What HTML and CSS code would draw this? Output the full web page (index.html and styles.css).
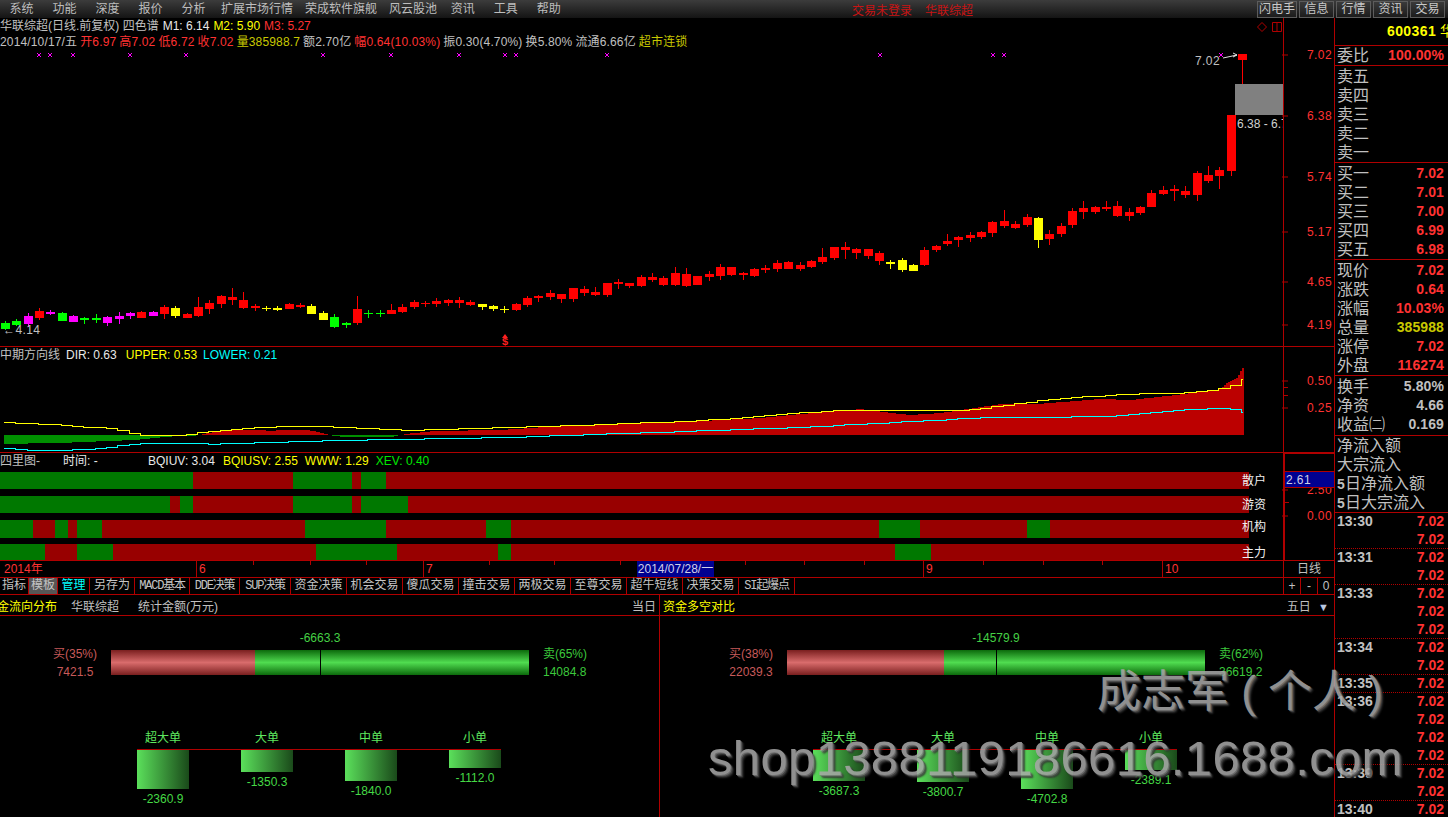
FILE: index.html
```html
<!DOCTYPE html>
<html lang="zh-CN">
<head>
<meta charset="utf-8">
<title>华联综超 日线</title>
<link rel="stylesheet" href="styles.css">
</head>
<body>
<div class="app">
  <header class="menubar">
    <nav class="menu">
      <a class="mi">系统</a><a class="mi">功能</a><a class="mi">深度</a><a class="mi">报价</a><a class="mi">分析</a>
      <a class="mi long">扩展市场行情</a><a class="mi long">荣成软件旗舰</a><a class="mi long last">风云股池</a>
      <a class="mi">资讯</a><a class="mi">工具</a><a class="mi">帮助</a>
    </nav>
    <div class="status"><span>交易未登录</span><span>华联综超</span></div>
    <div class="quick">
      <button class="qb wide">闪电手</button><button class="qb">信息</button><button class="qb">行情</button><button class="qb">资讯</button><button class="qb">交易</button>
    </div>
  </header>

  <div class="workspace">
    <main class="main">
      <section class="pane pane-k">
        <div class="plot">
          <svg id="candles" class="canvas" viewBox="0 18 1283 328" width="1283" height="328"></svg>
          <div class="legend">
            <span class="c-grey">华联综超(日线.前复权) 四色谱</span>
            <span class="c-white">M1: 6.14</span><span class="c-yellow">M2: 5.90</span><span class="c-red">M3: 5.27</span>
          </div>
          <div class="quote">
            <span class="c-grey">2014/10/17/五</span>
            <span class="c-red">开6.97</span><span class="c-red">高7.02</span><span class="c-red">低6.72</span><span class="c-red">收7.02</span>
            <span class="c-olive">量385988.7</span><span class="c-grey">额2.70亿</span><span class="c-red">幅0.64(10.03%)</span>
            <span class="c-grey">振0.30(4.70%)</span><span class="c-grey">换5.80%</span><span class="c-grey">流通6.66亿</span><span class="c-olive">超市连锁</span>
          </div>
          <span class="note note-high">7.02</span>
          <span class="note note-low">←4.14</span>
          <div class="range"><i class="range-box"></i><span class="range-text">6.38 - 6.7</span></div>
          <div class="signal"><i class="signal-arrow"></i><span>$</span></div>
          <svg class="win-icons" width="26" height="12" viewBox="0 0 26 12"><path d="M5 1.5 9.5 6 5 10.5.5 6Z"/><path d="M15.5 1.5h9v9h-9ZM20 1.5v9"/></svg>
        </div>
        <div class="axis">
          <span class="tick" style="top:36px">7.02</span>
          <span class="tick" style="top:97px">6.38</span>
          <span class="tick" style="top:158px">5.74</span>
          <span class="tick" style="top:213px">5.17</span>
          <span class="tick" style="top:263px">4.65</span>
          <span class="tick" style="top:306px">4.19</span>
        </div>
      </section>

      <section class="pane pane-dir">
        <div class="plot">
          <svg id="bands" class="canvas" viewBox="0 347 1283 105" width="1283" height="105"></svg>
          <div class="legend">
            <span class="c-grey">中期方向线</span><span class="c-white">DIR: 0.63</span><span class="c-yellow spaced">UPPER: 0.53</span><span class="c-cyan">LOWER: 0.21</span>
          </div>
        </div>
        <div class="axis">
          <span class="tick" style="top:33px">0.50</span>
          <span class="tick" style="top:60px">0.25</span>
          <i class="minor" style="top:40px"></i>
          <i class="minor" style="top:48px"></i>
        </div>
      </section>

      <section class="pane pane-quad">
        <div class="plot">
          <div class="legend">
            <span class="c-grey quad-title">四里图-</span><span class="c-white quad-time">时间: -</span>
            <span class="c-white">BQIUV: 3.04</span><span class="c-yellow">BQIUSV: 2.55</span><span class="c-yellow">WWW: 1.29</span><span class="c-green">XEV: 0.40</span>
          </div>
          <div id="quad" class="quad"></div>
        </div>
        <div class="axis axis-boxed">
          <span class="tick" style="top:35px">2.50</span>
          <span class="tick" style="top:61px">0.00</span>
          <i class="minor" style="top:48px"></i>
          <span class="cursor-price">2.61</span>
        </div>
      </section>

      <div class="dates">
        <div class="date-track">
          <span class="year">2014年</span>
          <span class="month" style="left:196px">6</span>
          <span class="month" style="left:423px">7</span>
          <span class="month" style="left:923px">9</span>
          <span class="month" style="left:1162px">10</span>
          <i class="dtick" style="left:253px"></i><i class="dtick" style="left:310px"></i><i class="dtick" style="left:366px"></i>
          <i class="dtick" style="left:489px"></i><i class="dtick" style="left:554px"></i><i class="dtick" style="left:620px"></i>
          <i class="dtick" style="left:745px"></i><i class="dtick" style="left:804px"></i><i class="dtick" style="left:864px"></i>
          <i class="dtick" style="left:983px"></i><i class="dtick" style="left:1043px"></i><i class="dtick" style="left:1102px"></i>
          <span class="cursor-date">2014/07/28/一</span>
        </div>
        <div class="period">日线</div>
      </div>

      <div class="tabbar">
        <div class="tabs">
          <a class="tab w29">指标</a><a class="tab w29 active">模板</a><a class="tab w32 accent">管理</a><a class="tab w45">另存为</a>
          <a class="tab w55">MACD基本</a><a class="tab w50">DDE决策</a><a class="tab w51">SUP决策</a>
          <a class="tab w56">资金决策</a><a class="tab w56">机会交易</a><a class="tab w56">傻瓜交易</a><a class="tab w56">撞击交易</a>
          <a class="tab w56">两极交易</a><a class="tab w56">至尊交易</a><a class="tab w56">超牛短线</a><a class="tab w56">决策交易</a><a class="tab w56">SI起爆点</a>
        </div>
        <div class="zoomers"><span>+</span><span>-</span><span>0</span></div>
      </div>

      <div class="funds">
        <section class="panel panel-left">
          <header class="panel-head">
            <span class="c-yellow head-title">金流向分布</span><span class="head-code">华联综超</span><span class="head-unit">统计金额(万元)</span>
            <span class="head-range">当日</span>
          </header>
          <div class="flow">
            <div class="flow-side buy"><span>买(35%)</span><span>7421.5</span></div>
            <div class="flow-bar">
              <div class="seg-buy" style="width:34.4%"></div><div class="seg-sell"></div>
              <i class="flow-mid"></i><span class="flow-net">-6663.3</span>
            </div>
            <div class="flow-side sell"><span>卖(65%)</span><span>14084.8</span></div>
          </div>
          <div class="tiers">
            <div class="tier"><span class="tier-name">超大单</span><i class="tier-bar" style="height:39px"></i><span class="tier-val">-2360.9</span></div>
            <div class="tier"><span class="tier-name">大单</span><i class="tier-bar" style="height:22px"></i><span class="tier-val">-1350.3</span></div>
            <div class="tier"><span class="tier-name">中单</span><i class="tier-bar" style="height:31px"></i><span class="tier-val">-1840.0</span></div>
            <div class="tier"><span class="tier-name">小单</span><i class="tier-bar" style="height:18px"></i><span class="tier-val">-1112.0</span></div>
          </div>
        </section>
        <section class="panel panel-right">
          <header class="panel-head">
            <span class="c-yellow">资金多空对比</span>
            <span class="head-range">五日 <b class="caret">▼</b></span>
          </header>
          <div class="flow">
            <div class="flow-side buy"><span>买(38%)</span><span>22039.3</span></div>
            <div class="flow-bar">
              <div class="seg-buy" style="width:37.6%"></div><div class="seg-sell"></div>
              <i class="flow-mid"></i><span class="flow-net">-14579.9</span>
            </div>
            <div class="flow-side sell"><span>卖(62%)</span><span>36619.2</span></div>
          </div>
          <div class="tiers">
            <div class="tier"><span class="tier-name">超大单</span><i class="tier-bar" style="height:31px"></i><span class="tier-val">-3687.3</span></div>
            <div class="tier"><span class="tier-name">大单</span><i class="tier-bar" style="height:32px"></i><span class="tier-val">-3800.7</span></div>
            <div class="tier"><span class="tier-name">中单</span><i class="tier-bar" style="height:39px"></i><span class="tier-val">-4702.8</span></div>
            <div class="tier"><span class="tier-name">小单</span><i class="tier-bar" style="height:20px"></i><span class="tier-val">-2389.1</span></div>
          </div>
        </section>
      </div>
    </main>

    <aside class="side">
      <div class="sec sec-code"><span class="code">600361</span> <span class="c-yellow name">华联综超</span></div>
      <div class="sec sec-ratio"><div class="row"><span>委比</span><b class="v-red">100.00%</b></div></div>
      <div class="sec">
        <div class="row"><span>卖五</span></div><div class="row"><span>卖四</span></div><div class="row"><span>卖三</span></div><div class="row"><span>卖二</span></div><div class="row"><span>卖一</span></div>
      </div>
      <div class="sec">
        <div class="row"><span>买一</span><b class="v-red">7.02</b></div><div class="row"><span>买二</span><b class="v-red">7.01</b></div><div class="row"><span>买三</span><b class="v-red">7.00</b></div><div class="row"><span>买四</span><b class="v-red">6.99</b></div><div class="row"><span>买五</span><b class="v-red">6.98</b></div>
      </div>
      <div class="sec">
        <div class="row"><span>现价</span><b class="v-red">7.02</b></div><div class="row"><span>涨跌</span><b class="v-red">0.64</b></div><div class="row"><span>涨幅</span><b class="v-red">10.03%</b></div>
        <div class="row"><span>总量</span><b class="v-olive">385988</b></div><div class="row"><span>涨停</span><b class="v-red">7.02</b></div><div class="row"><span>外盘</span><b class="v-red">116274</b></div>
      </div>
      <div class="sec sec-fin">
        <div class="row"><span>换手</span><b class="v-grey">5.80%</b></div><div class="row"><span>净资</span><b class="v-grey">4.66</b></div><div class="row"><span>收益㈡</span><b class="v-grey">0.169</b></div>
      </div>
      <div class="sec sec-flow">
        <div class="row"><span>净流入额</span></div><div class="row"><span>大宗流入</span></div><div class="row"><span><b class="five">5</b>日净流入额</span></div><div class="row"><span><b class="five">5</b>日大宗流入</span></div>
      </div>
      <div class="trades">
        <div class="tg n2"><div class="tr"><span>13:30</span><b>7.02</b></div><div class="tr"><b>7.02</b></div></div>
        <div class="tg n2"><div class="tr"><span>13:31</span><b>7.02</b></div><div class="tr"><b>7.02</b></div></div>
        <div class="tg n3"><div class="tr"><span>13:33</span><b>7.02</b></div><div class="tr"><b>7.02</b></div><div class="tr"><b>7.02</b></div></div>
        <div class="tg n2"><div class="tr"><span>13:34</span><b>7.02</b></div><div class="tr"><b>7.02</b></div></div>
        <div class="tg n1"><div class="tr"><span>13:35</span><b>7.02</b></div></div>
        <div class="tg n4"><div class="tr"><span>13:36</span><b>7.02</b></div><div class="tr"><b>7.02</b></div><div class="tr"><b>7.02</b></div><div class="tr"><b>7.02</b></div></div>
        <div class="tg n2"><div class="tr"><span>13:39</span><b>7.02</b></div><div class="tr"><b>7.02</b></div></div>
        <div class="tg n1"><div class="tr"><span>13:40</span><b>7.02</b></div></div>
      </div>
    </aside>
  </div>

  <div class="wm wm-name">成志军 ( 个人 )</div>
  <div class="wm wm-shop">shop1388119186616.1688.com</div>
</div>
<script src="chart.js"></script>
</body>
</html>
```

FILE: styles.css
```css
* { box-sizing: border-box; }
html, body { margin: 0; padding: 0; background: #000; }
body {
  font-family: "Liberation Sans", "Noto Sans CJK SC", sans-serif;
  font-size: 12px;
  color: #c0c0c0;
}
.app { position: relative; width: 1448px; height: 817px; overflow: hidden; background: #000; }

.c-grey { color: #c0c0c0; }
.c-white { color: #e8e8e8; }
.c-yellow { color: #ffff00; }
.c-olive { color: #c8c800; }
.c-red { color: #ff3232; }
.c-cyan { color: #00ffff; }
.c-green { color: #00e600; }

/* menu */
.menubar {
  display: flex; align-items: center; height: 18px;
  background: linear-gradient(#3c3c3c, #141414);
}
.menu { display: flex; width: 852px; color: #bdbdbd; }
.mi { padding: 0 9.5px; line-height: 17px; white-space: nowrap; }
.mi.long { padding: 0 6px; }
.mi.long.last { padding-right: 4px; }
.status { display: flex; gap: 13px; color: #c81414; width: 405px; }
.quick { display: flex; gap: 2px; }
.qb {
  width: 35px; height: 17px; padding: 0; font: inherit; line-height: 14px; color: #c8c8c8;
  background: linear-gradient(#3a3a3a, #1c1c1c);
  border: 1px solid #5c5c5c;
}
.qb.wide { width: 40px; }

/* layout */
.workspace { display: flex; height: 799px; }
.main { width: 1335px; border-right: 1px solid #b00000; display: flex; flex-direction: column; }
.side { width: 113px; overflow: hidden; }

.pane { display: flex; border-bottom: 1px solid #b00000; }
.pane-k { height: 329px; }
.pane-dir { height: 106px; }
.pane-quad { height: 108px; }
.plot { position: relative; width: 1283px; overflow: hidden; }
.canvas { position: absolute; left: 0; top: 0; display: block; shape-rendering: crispEdges; }

.legend { position: relative; display: flex; gap: 6px; height: 16px; line-height: 16px; white-space: nowrap; }
.pane-k .legend { gap: 4px; height: 17px; line-height: 17px; }
.pane-dir .legend .spaced { margin-left: 3px; }
.quote {
  position: relative; display: flex; gap: 3px; height: 15px; line-height: 15px; white-space: nowrap;
  letter-spacing: .15px;
}

.axis { position: relative; width: 51px; border-left: 1px solid #b00000; }
.axis-boxed { border-left-width: 2px; border-top: 1px solid #b00000; }
.tick {
  position: absolute; right: 2px; transform: translateY(-50%);
  line-height: 14px; padding-top: 1px; color: #ff3232; letter-spacing: .4px;
}
.tick::before {
  content: ""; position: absolute; top: 50%; right: 24px; width: 26px; height: 1px;
  background: linear-gradient(to right, #b00000 6px, transparent 6px);
}
.minor { position: absolute; left: 0; width: 4px; height: 1px; background: #b00000; }
.cursor-price {
  position: absolute; left: 0; right: 0; top: 17px; height: 17px; padding-left: 1px;
  line-height: 16px; color: #d0d0e8; background: #000090;
  border-top: 1px solid #b00000; border-bottom: 1px solid #b00000; letter-spacing: .4px;
}

/* chart overlays */
.note { position: absolute; line-height: 14px; color: #c0c0c0; letter-spacing: .4px; }
.note-high { left: 1195px; top: 36px; }
.note-low { left: 3px; top: 305px; }
.range { position: absolute; left: 1235px; top: 66px; width: 48px; white-space: nowrap; overflow: hidden; }
.range-box { display: block; height: 31px; background: #808080; }
.range-text { display: block; padding: 2px 0 0 2px; color: #d0d0d0; line-height: 15px; }
.signal {
  position: absolute; left: 501px; top: 316px; width: 8px; text-align: center;
  color: #ff2020; font-family: "Liberation Mono", monospace; font-weight: 700; line-height: 8px; font-size: 11px;
}
.signal-arrow {
  display: block; width: 0; height: 0; margin: 0 auto;
  border-left: 3px solid transparent; border-right: 3px solid transparent; border-bottom: 4px solid #ff2020;
}
.signal span { display: block; }
.win-icons { position: absolute; left: 1257px; top: 3px; fill: none; stroke: #b00000; stroke-width: 1; }

/* four bands */
.quad { display: flex; flex-direction: column; padding-top: 3px; }
.pane-quad .legend { height: 16px; line-height: 16px; gap: 0; }
.quad-title { width: 63px; }
.quad-time { width: 85px; }
.pane-quad .legend .c-white + .c-white { margin-right: 8px; }
.pane-quad .legend .c-yellow { margin-right: 7px; }
.q-row { position: relative; display: flex; width: 1249px; height: 17px; margin-bottom: 7px; }
.q-row.tall { height: 18px; margin-bottom: 6px; }
.q-g { background: #007800; }
.q-r { background: #980000; }
.q-label {
  position: absolute; left: 1242px; top: 0; width: 26px; line-height: 18px; color: #f0f0f0; white-space: nowrap;
}
.q-row.tall .q-label { line-height: 14px; }

/* dates */
.dates { display: flex; height: 17px; border-bottom: 1px solid #b00000; }
.date-track { position: relative; width: 1283px; }
.year { position: absolute; left: 4px; top: 0; line-height: 17px; color: #ff3232; }
.month {
  position: absolute; top: 0; height: 16px; padding-left: 2px; line-height: 17px; color: #ff3232;
  border-left: 1px solid #b00000;
}
.dtick { position: absolute; top: 0; width: 1px; height: 4px; background: #b00000; }
.cursor-date {
  position: absolute; left: 637px; top: 0; width: 77px; height: 16px;
  line-height: 16px; text-align: center; color: #d0d0e8; background: #000090; white-space: nowrap;
}
.period { flex: 1; border-left: 1px solid #b00000; text-align: center; line-height: 16px; }

/* tabs */
.tabbar { display: flex; height: 17px; border-bottom: 1px solid #b00000; }
.tabs { display: flex; width: 1283px; }
.tab {
  text-align: center; line-height: 16px; border-right: 1px solid #b00000; white-space: nowrap;
  font-family: "Liberation Mono", "Noto Sans CJK SC", monospace; font-size: 12px; color: #c4c4c4;
}
.tab.w29 { width: 29px; }
.tab.w32 { width: 32px; }
.tab.w45 { width: 45px; }
.tab.w50 { width: 50px; }
.tab.w51 { width: 51px; }
.tab.w55 { width: 55px; }
.tab.w56 { width: 56px; }
.tab.w55, .tab.w50, .tab.w51, .tab:last-child { letter-spacing: -1.2px; }
.tab.active { background: #565656; }
.tab.accent { color: #00ffff; }
.zoomers { flex: 1; display: flex; border-left: 1px solid #b00000; }
.zoomers span { flex: 1; text-align: center; line-height: 16px; border-right: 1px solid #b00000; }
.zoomers span:last-child { border-right: 0; }

/* fund panels */
.funds { display: flex; flex: 1; }
.panel { height: 100%; }
.panel-left { width: 660px; border-right: 1px solid #b00000; }
.panel-right { flex: 1; }
.panel-head {
  display: flex; align-items: center; height: 21px; border-bottom: 1px solid #b00000; white-space: nowrap;
}
.panel-right .panel-head { padding-left: 3px; }
.head-title { margin-left: -3px; }
.head-code { margin-left: 14px; }
.head-unit { margin-left: 19px; }
.head-range { margin-left: auto; padding-right: 3px; }
.panel-right .head-range { padding-right: 5px; }
.caret { margin-left: 4px; font-weight: 400; color: #b8c8e0; font-size: 11px; }

.flow { display: flex; align-items: center; height: 25px; margin-top: 34px; }
.flow-side { display: flex; flex-direction: column; line-height: 18px; flex: none; white-space: nowrap; }
.flow-side.buy { align-items: center; width: 46px; color: #c85a5a; margin-right: 13px; }
.panel-left .flow-side.buy { margin-left: 52px; }
.panel-right .flow-side.buy { margin-left: 68px; }
.flow-side.sell { margin-left: 14px; color: #3cc83c; }
.flow-bar { position: relative; display: flex; width: 418px; height: 25px; flex: none; }
.seg-buy { background: linear-gradient(#7a1f1f, #d96c6c 50%, #7a1f1f); }
.seg-sell { flex: 1; background: linear-gradient(#0c6a0c, #50dc50 50%, #0c6a0c); }
.flow-mid { position: absolute; left: 50%; top: 0; width: 1px; height: 100%; background: #000; }
.flow-net {
  position: absolute; left: 50%; bottom: calc(100% + 5px); transform: translateX(-50%);
  color: #45d045; line-height: 14px; white-space: nowrap;
}

.tiers { position: relative; display: flex; gap: 52px; width: 364px; margin-top: 54px; }
.panel-left .tiers { margin-left: 137px; }
.panel-right .tiers { margin-left: 153px; }
.tiers::before { content: ""; position: absolute; left: 0; right: 0; top: 20px; height: 1px; background: #b00000; }
.tier { display: flex; flex-direction: column; align-items: center; width: 52px; }
.tier-name { height: 21px; line-height: 19px; color: #5fe85f; white-space: nowrap; }
.tier-bar { display: block; width: 52px; background: linear-gradient(to right, #5be05b, #1a4a1a); }
.tier-val { margin-top: 1px; line-height: 18px; color: #45d845; white-space: nowrap; }

/* side */
.sec { padding: 1px 4px 0 2px; border-bottom: 1px solid #b00000; }
.sec-code {
  height: 28px; padding: 0 0 0 52px; line-height: 27px; white-space: nowrap;
  font-size: 14px; overflow: hidden;
}
.sec-ratio { padding-top: 0; }
.sec-fin { padding-bottom: 1px; }
.sec-flow { padding-top: 0; }
.code { font-weight: 700; color: #ffff00; letter-spacing: .4px; }
.name { font-size: 14px; }
.row { display: flex; justify-content: space-between; height: 19px; line-height: 19px; font-size: 16px; white-space: nowrap; }
.row b { font-size: 14px; letter-spacing: .1px; }
.five { font-size: 14px; }
.v-red { color: #ff3232; }
.v-olive { color: #c8c800; }
.v-grey { color: #c0c0c0; }
.trades { display: flex; flex-direction: column; }
.tg { border-bottom: 1px dotted #b00000; padding: 0 4px 0 2px; }
.tg.n1 { height: 18px; }
.tg.n2 { height: 36px; }
.tg.n3 { height: 54px; }
.tg.n4 { height: 72px; }
.tr { display: flex; justify-content: space-between; height: 18px; line-height: 17px; font-size: 14px; font-weight: 700; }
.tr span { color: #c0c0c0; }
.tr b { margin-left: auto; color: #ff3232; }

/* watermark */
.wm {
  position: absolute; white-space: nowrap; color: #a8a8a8; opacity: .86;
  text-shadow: 1px 1px 0 #7c7c7c, 2px 2px 1px #505050, 3px 3px 2px #303030;
}
.wm-name { left: 1097px; top: 664px; font-size: 44px; line-height: 56px; font-weight: 400; }
.wm-shop { left: 708px; top: 729px; font-size: 49px; line-height: 58px; letter-spacing: .35px; }
```

FILE: chart.js
```javascript
(function () {
  var NS = 'http://www.w3.org/2000/svg';
  var COL = { r: '#ff0000', g: '#00ff00', m: '#ff00ff', y: '#ffff00' };
  // [colour, wickTop, wickBottom, bodyTop, bodyBottom] in 3x-scaled units around a base y
  var runs = [
    [280, 'g 122 150 129 146,g 116 138 122 135,m 99 140 108 132,r 84 119 93 113,m 90 106 95 101,g 96 123 99 123,m 105 126 108 125,g 110 131 115 120,g 102 128 115 119,m 108 137 111 129,m 96 131 108 117,m 97 117 99 107,r 94 114 96 113,m 94 108 96 107,r 75 117 81 102,y 78 113 84 108,r 100 114 103 114,r 52 110 81 108,r 60 101 69 87,r 45 83 48 72,r 25 75 51 60,r 36 87 60 84,r 72 93 78 84,y 78 92 84 87,y 78 92 84 90,r 69 88 72 87,r 69 84 74 80,y 72 103 78 102,y 93 120 99 120,g 102 144 111 141,g 126 144 129 134,r 48 135 87 129,g 90 114 100 103,g 90 111 100 103,r 72 102 90 102,r 72 99 81 96,r 60 87 66 81,r 63 82 69 72,r 54 81 63 72,r 57 78 60 69,r 51 84 60 69,r 60 78 66 75'],
    [230, 'y 222 240 222 231,y 225 243 228 237,y 228 249 236 239,r 220 243 222 240,r 198 231 204 225,r 195 216 198 204,r 180 210 189 201,r 192 219 192 207,r 174 216 174 207,r 168 198 177 189,r 171 198 186 195,r 159 201 159 195,r 147 177 155 162,r 159 174 159 168,r 135 171 141 168,r 129 156 141 150,r 138 168 144 165,r 111 168 129 165,r 114 171 132 168,r 138 165 138 165,r 123 153 132 141,r 102 150 111 138,r 111 138 111 135,r 126 150 129 134,r 114 141 117 138,r 105 129 114 120,r 90 126 99 117,r 93 117 96 117,r 96 123 105 117,r 90 114 93 111'],
    [170, 'r 234 281 261 276,r 231 270 231 264,r 216 266 231 240,r 234 267 237 249,r 237 266 237 258,r 243 285 249 273,y 270 297 276 282,y 264 306 270 300,y 282 303 285 303,r 231 288 240 285,r 225 246 228 240,r 192 228 213 222,r 198 231 201 210,r 186 216 195 204,r 183 207 186 201,r 153 201 156 189,r 120 174 153 168,r 153 177 162 174,r 132 171 141 165,y 141 234 144 210,r 180 225 192 207,r 159 201 168 192,r 114 174 123 165,r 93 147 114 126,r 108 132 111 126,r 93 123 111 117,r 93 141 108 138,r 114 153 126 138,r 108 135 111 129'],
    [0, 'r 570 622 580 622,r 558 585 570 582,r 555 603 567 573,r 558 594 573 585,r 513 603 519 585,r 498 549 525 543,r 501 567 510 528,r 345 528 345 513,r 162 252 162 180']
  ];

  function el(name, attrs, parent) {
    var n = document.createElementNS(NS, name);
    for (var k in attrs) n.setAttribute(k, attrs[k]);
    parent.appendChild(n);
    return n;
  }

  // price chart
  var svg = document.getElementById('candles');
  var i = 0;
  runs.forEach(function (run) {
    run[1].split(',').forEach(function (s) {
      var p = s.split(' ');
      var base = run[0];
      var y = function (v) { return Math.round(base + (+v) / 3); };
      var cx = Math.round(5 + 11.35 * i);
      var fill = COL[p[0]];
      el('rect', { x: cx, y: y(p[1]), width: 1, height: y(p[2]) - y(p[1]), fill: fill }, svg);
      el('rect', { x: cx - 4, y: y(p[3]), width: 9, height: Math.max(1, y(p[4]) - y(p[3])), fill: fill }, svg);
      i++;
    });
  });
  [39, 50, 73, 130, 186, 323, 391, 459, 505, 516, 607, 880, 993, 1004, 1221].forEach(function (x) {
    var d = 'M' + (x - 2) + ' 53l4 4M' + (x + 2) + ' 53l-4 4';
    el('path', { d: d, stroke: '#ff00ff', 'stroke-width': 1, fill: 'none' }, svg);
  });
  el('path', { d: 'M1223 58 1237 55M1233 53l4 2-4 2', stroke: '#e0e0e0', 'stroke-width': 1, fill: 'none', 'shape-rendering': 'auto' }, svg);

  // direction chart
  var bands = document.getElementById('bands');
  var BASE = 435;
  var area = [[4,444],[35,443.3],[65,442.7],[100,441.3],[133,440],[147,438.7],[167,436.7],[200,435.3],[203,434],[220,430.7],[240,429.7],[260,430],[270,431],[283,429.7],[307,430],[320,432.7],[328,435],[340,436.7],[367,437],[393,436.7],[400,435],[413,433],[433,431],[500,430],[560,426],[650,423],[700,421],[760,418],[800,414],[860,409],[900,414],[910,415],[940,413],[1000,404],[1040,403.7],[1100,399],[1130,400],[1160,396.7],[1200,392],[1220,389],[1226,383],[1236,378],[1243,366]];
  var upper = [[4,422.3],[33,423.3],[57,425],[90,427],[113,429],[138,434.7],[180,434.7],[200,431.7],[233,429],[270,426.3],[327,426.3],[363,428.3],[410,430],[453,428.3],[500,427],[600,424],[700,420],[800,412.3],[839,410],[900,410],[960,410],[1018,403],[1040,400],[1112,394],[1180,392.7],[1220,388],[1236,383],[1243,377]];
  var lower = [[4,448.3],[35,450.3],[100,448.3],[120,445],[147,442.7],[213,443.7],[283,441.3],[350,439.7],[467,437.7],[500,437],[650,432],[800,426.7],[977,417.3],[1043,416.7],[1110,416],[1167,410.7],[1213,407.3],[1227,408.7],[1243,412.7]];
  function at(pts, x) {
    for (var k = 1; k < pts.length; k++) {
      if (x <= pts[k][0]) {
        var a = pts[k - 1], b = pts[k];
        return a[1] + (b[1] - a[1]) * (x - a[0]) / (b[0] - a[0]);
      }
    }
    return pts[pts.length - 1][1];
  }
  var x;
  for (x = 4; x < 1244; x += 2) {
    var v = Math.round(at(area, x));
    if (v === BASE) continue;
    var top = Math.min(v, BASE), h = Math.abs(v - BASE);
    el('rect', { x: x, y: top, width: 2, height: h, fill: v < BASE ? '#bc0000' : '#009000' }, bands);
  }
  function stepLine(pts, colour) {
    var d = '', step = 11.35, last = null;
    for (var q = 4; q < 1244; q += step) {
      var yy = Math.round(at(pts, q)) + 0.5;
      d += last === null ? 'M' + Math.round(q) + ' ' + yy : 'H' + Math.round(q) + 'V' + yy;
      last = yy;
    }
    d += 'H1243';
    el('path', { d: d, fill: 'none', stroke: colour, 'stroke-width': 1 }, bands);
  }
  stepLine(upper, '#ffff00');
  stepLine(lower, '#00ffff');

  // four-band chart: segment ends as x positions, first colour given
  var quad = document.getElementById('quad');
  var rows = [
    ['散户', [193, 293, 352, 361, 386, 1249], ''],
    ['游资', [170, 180, 193, 293, 352, 361, 408, 1249], ''],
    ['机构', [33, 55, 68, 77, 102, 305, 386, 486, 511, 879, 920, 1027, 1050, 1249], 'tall'],
    ['主力', [45, 77, 113, 316, 397, 498, 511, 895, 931, 1249], '']
  ];
  rows.forEach(function (r) {
    var row = document.createElement('div');
    row.className = 'q-row ' + r[2];
    var prev = 0, green = true;
    r[1].forEach(function (end) {
      var s = document.createElement('div');
      s.className = green ? 'q-g' : 'q-r';
      s.style.width = (end - prev) + 'px';
      row.appendChild(s);
      prev = end;
      green = !green;
    });
    var label = document.createElement('span');
    label.className = 'q-label';
    label.textContent = r[0];
    row.appendChild(label);
    quad.appendChild(row);
  });
})();
```
